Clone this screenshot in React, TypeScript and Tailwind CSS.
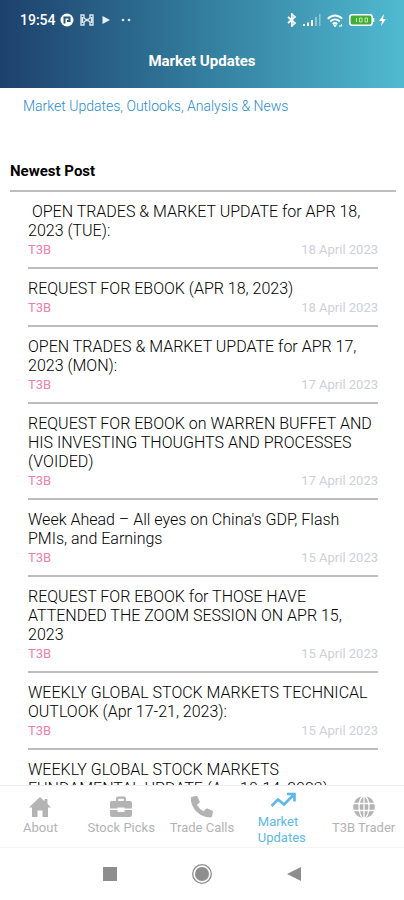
import type { ReactNode } from "react";

interface Post {
  title: string;
  author: string;
  date: string;
}

interface Tab {
  label: string;
  icon: ReactNode;
  active?: boolean;
}

const posts: Post[] = [
  { title: "\u00a0OPEN TRADES & MARKET UPDATE for APR 18, 2023 (TUE):", author: "T3B", date: "18 April 2023" },
  { title: "REQUEST FOR EBOOK (APR 18, 2023)", author: "T3B", date: "18 April 2023" },
  { title: "OPEN TRADES & MARKET UPDATE for APR 17, 2023 (MON):", author: "T3B", date: "17 April 2023" },
  {
    title: "REQUEST FOR EBOOK on WARREN BUFFET AND HIS INVESTING THOUGHTS AND PROCESSES (VOIDED)",
    author: "T3B",
    date: "17 April 2023",
  },
  { title: "Week Ahead – All eyes on China's GDP, Flash PMIs, and Earnings", author: "T3B", date: "15 April 2023" },
  {
    title: "REQUEST FOR EBOOK for THOSE HAVE ATTENDED THE ZOOM SESSION ON APR 15, 2023",
    author: "T3B",
    date: "15 April 2023",
  },
  { title: "WEEKLY GLOBAL STOCK MARKETS TECHNICAL OUTLOOK (Apr 17-21, 2023):", author: "T3B", date: "15 April 2023" },
  { title: "WEEKLY GLOBAL STOCK MARKETS FUNDAMENTAL UPDATE (Apr 10-14, 2023):", author: "T3B", date: "15 April 2023" },
];

const tabs: Tab[] = [
  {
    label: "About",
    icon: (
      <svg viewBox="0 0 24 22" className="h-[22px] w-6" fill="currentColor" aria-hidden="true">
        <path d="M12 1 1 11.5h3V21h5.5v-6.5h5V21H20v-9.5h3l-3.5-3.4V3h-3v2.3z" />
      </svg>
    ),
  },
  {
    label: "Stock Picks",
    icon: (
      <svg viewBox="0 0 24 22" className="h-[22px] w-6" fill="currentColor" aria-hidden="true">
        <path
          fillRule="evenodd"
          d="M7 5V2.5A2 2 0 0 1 9 .5h6a2 2 0 0 1 2 2V5h4a2 2 0 0 1 2 2v5.5h-7.5v-1h-7v1H1V7a2 2 0 0 1 2-2zm2.2 0h5.6V2.7H9.200z"
        />
        <path d="M1 14h7.500v2h7v-2H23v5a2 2 0 0 1-2 2H3a2 2 0 0 1-2-2z" />
      </svg>
    ),
  },
  {
    label: "Trade Calls",
    icon: (
      <svg viewBox="0 0 24 22" className="h-[22px] w-6" fill="currentColor" aria-hidden="true">
        <path d="M2 .8 6 0c.8-.1 1.400.2 1.700.9l1.900 4.400c.3.6.1 1.300-.4 1.700L7 8.800c1.500 3 3.700 5 6.700 6.500l1.900-2.300c.4-.5 1-.7 1.700-.4l4.800 2c.7.3 1 .9.8 1.600l-1 4.300c-.2.7-.7 1-1.400 1C9.500 21.500.8 12.500.8 2.100c0-.7.5-1.200 1.200-1.300z" />
      </svg>
    ),
  },
  {
    label: "Market Updates",
    active: true,
    icon: (
      <svg
        viewBox="0 0 26 16"
        className="h-4 w-[26px]"
        fill="none"
        stroke="currentColor"
        strokeWidth="2.6"
        aria-hidden="true"
      >
        <path d="m1.500 14 6.500-6.500 6 5L23 3.500M17 2h7.500v7.500" />
      </svg>
    ),
  },
  {
    label: "T3B Trader",
    icon: (
      <svg viewBox="0 0 24 22" className="h-[22px] w-6" aria-hidden="true">
        <circle cx="12" cy="11" r="10.800" fill="currentColor" />
        <g fill="none" stroke="#fff" strokeWidth="1.300">
          <ellipse cx="12" cy="11" rx="5" ry="11" />
          <path d="M0 7.500h24M0 14.500h24M12 0v22" />
        </g>
      </svg>
    ),
  },
];

function StatusBar() {
  return (
    <div className="flex h-10 items-center justify-between pr-[18px] pl-5">
      <div className="flex items-center gap-1">
        <span className="text-sm font-medium">19:54</span>
        <svg viewBox="0 0 14 14" className="size-3.5" aria-hidden="true">
          <circle cx="7" cy="7" r="6.500" fill="#fff" />
          <path d="M4.500 10.500v-6h5v3.500H7" fill="none" stroke="#27577f" strokeWidth="2" />
        </svg>
        <svg
          viewBox="0 0 14 12"
          className="ml-0.5 h-3 w-3.5"
          fill="none"
          stroke="#dbe7ef"
          strokeWidth="1.400"
          aria-hidden="true"
        >
          <path d="M1 1h3v3l2 1.500h2L10 4V1h3v10h-3V8L8 6.500H6L4 8v3H1zM2.500 3v6M11.500 3v6" />
        </svg>
        <svg viewBox="0 0 8 8" className="ml-1 size-2" aria-hidden="true">
          <path d="M.5 0 8 4 .5 8z" fill="#e6f0f5" />
        </svg>
        <svg viewBox="0 0 12 4" className="ml-1.5 h-1 w-3" fill="#dbe7ef" aria-hidden="true">
          <circle cx="3" cy="2" r="1.300" />
          <circle cx="9" cy="2" r="1.300" />
        </svg>
      </div>

      <div className="flex items-center gap-1">
        <svg
          viewBox="0 0 10 14"
          className="mr-0.5 h-3.5 w-2.5"
          fill="none"
          stroke="#fff"
          strokeWidth="1.700"
          aria-hidden="true"
        >
          <path d="m1 4 7 6-3.200 3V1L8 4l-7 6" />
        </svg>
        <svg viewBox="0 0 18 12" className="h-3 w-[18px]" fill="#fff" aria-hidden="true">
          <path d="M0 10h2v2H0zM4 8.500h2V12H4zM8 6h2v6H8z" />
          <path d="M12 3h2v9h-2zM16 0h1.500v12H16z" opacity=".4" />
        </svg>
        <svg
          viewBox="0 0 16 13"
          className="ml-0.5 h-[13px] w-4"
          fill="none"
          stroke="#fff"
          strokeWidth="1.900"
          aria-hidden="true"
        >
          <path d="M.8 4.800c4.200-4.400 10.200-4.400 14.400 0M3.300 7.500c2.800-2.700 6.600-2.700 9.400 0M5.800 10c1.400-1.200 3-1.200 4.400 0" />
          <path d="M7 11h2l-1 1.500zM12 12h2.500v-2" strokeWidth="1.200" />
        </svg>
        <svg viewBox="0 0 26 12" className="ml-0.5 h-3 w-[26px]" aria-hidden="true">
          <rect x=".8" y=".8" width="22.400" height="10.400" rx="2.500" fill="#43ad3a" stroke="#fff" strokeWidth="1.600" />
          <path d="M24.500 4v4" stroke="#fff" strokeWidth="1.600" />
          <path d="M7.500 4v4M10.500 4h2.500v4h-2.500zM16 4h2.500v4H16z" fill="none" stroke="#c5e8a5" />
        </svg>
        <svg viewBox="0 0 7 12" className="h-3 w-[7px]" aria-hidden="true">
          <path d="M5 0 0 7h3l-1 5 5-7H4z" fill="#fff" />
        </svg>
      </div>
    </div>
  );
}

function PostItem({ post }: { post: Post }) {
  return (
    <li className="border-b-2 border-[#bdbdbd] pt-2.5 pb-[7px]">
      <h3 className="text-base leading-[19px] font-light text-black">{post.title}</h3>
      <div className="flex justify-between text-[13px] leading-5">
        <span className="text-[#ef7fae]">{post.author}</span>
        <time className="text-[#cdd0d8]">{post.date}</time>
      </div>
    </li>
  );
}

function TabBar() {
  return (
    <nav className="grid h-[62px] shrink-0 grid-cols-5 border-t border-[#ededed]">
      {tabs.map((tab) => (
        <button
          key={tab.label}
          type="button"
          aria-current={tab.active ? "page" : undefined}
          className={
            tab.active
              ? "flex flex-col items-center gap-1.5 pt-1.5 text-[#5bb9e8]"
              : "flex flex-col items-center pt-2.5 text-[#b3b3b3]"
          }
        >
          {tab.icon}
          <span
            className={
              tab.active
                ? "w-[50px] text-left text-[13px] leading-4"
                : "text-[13px] leading-5 whitespace-nowrap"
            }
          >
            {tab.label}
          </span>
        </button>
      ))}
    </nav>
  );
}

function SystemNav() {
  return (
    <div className="flex h-[53px] shrink-0 items-center justify-center gap-[75px] border-t border-[#f5f5f5] text-[#8e8e8e]">
      <button type="button" aria-label="Recent apps">
        <svg viewBox="0 0 14 14" className="size-3.5">
          <path d="M0 0h14v14H0z" fill="currentColor" />
        </svg>
      </button>
      <button type="button" aria-label="Home">
        <svg viewBox="0 0 20 20" className="size-5">
          <circle cx="10" cy="10" r="9.300" fill="none" stroke="currentColor" strokeWidth="1.300" />
          <circle cx="10" cy="10" r="7" fill="currentColor" />
        </svg>
      </button>
      <button type="button" aria-label="Back">
        <svg viewBox="0 0 14 14" className="size-3.5">
          <path d="M14 0v14L0 7z" fill="currentColor" />
        </svg>
      </button>
    </div>
  );
}

export default function App() {
  return (
    <div className="flex h-screen flex-col bg-white font-[Roboto,sans-serif]">
      <header className="h-[88px] shrink-0 bg-linear-to-r from-[#1d416d] via-[#337d9d] to-[#50bad1] text-white">
        <StatusBar />
        <h1 className="pt-[11px] text-center text-[15px] leading-5 font-bold">Market Updates</h1>
      </header>

      <main className="min-h-0 flex-1 overflow-hidden">
        <p className="px-[23px] pt-2 text-sm leading-5 font-light text-[#1f8bd0]">
          Market Updates, Outlooks, Analysis &amp; News
        </p>
        <section className="pt-[45px] pr-2 pl-2.5">
          <h2 className="border-b-2 border-[#bdbdbd] pb-[9px] text-[15px] leading-5 font-bold text-black">
            Newest Post
          </h2>
          <ul className="px-[18px]">
            {posts.map((post) => (
              <PostItem key={post.title} post={post} />
            ))}
          </ul>
        </section>
      </main>

      <TabBar />
      <SystemNav />
    </div>
  );
}
